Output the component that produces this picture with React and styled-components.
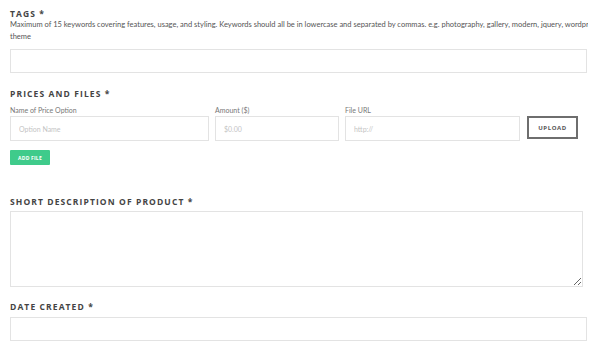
import React from "react";
import styled, { createGlobalStyle } from "styled-components";

const GlobalStyle = createGlobalStyle`
  html, body {
    margin: 0;
    padding: 0;
    background: #fff;
    overflow: hidden;
  }
  body {
    font-family: Lato, "Open Sans", sans-serif;
  }
`;

const Page = styled.div`
  width: 578px;
  padding: 8px 0 0 10px;
  display: flex;
  flex-direction: column;
  overflow: hidden;
`;

const Section = styled.div`
  display: flex;
  flex-direction: column;
  margin-top: ${(p) => p.top || 0}px;
`;

const Heading = styled.h3`
  margin: 0;
  font-family: "Open Sans", sans-serif;
  font-weight: 700;
  font-size: 8.5px;
  line-height: 11px;
  letter-spacing: 1.1px;
  color: #444;
  text-transform: uppercase;
`;

const Help = styled.p`
  margin: 0;
  width: 600px;
  font-size: 7.5px;
  line-height: 12px;
  color: #555;
`;

const Input = styled.input`
  box-sizing: border-box;
  display: block;
  width: ${(p) => p.w || "100%"};
  height: ${(p) => p.h || 24}px;
  margin-top: ${(p) => p.top || 0}px;
  border: 1px solid #e3e3e3;
  border-radius: 0;
  padding: 0 8px;
  font-family: Lato, sans-serif;
  font-size: 7px;
  color: #555;
  background: #fff;
  outline: none;
  &::placeholder {
    color: #c4c4c4;
  }
`;

const TextArea = styled.textarea`
  box-sizing: border-box;
  display: block;
  width: 573px;
  height: 76px;
  margin-top: 4px;
  border: 1px solid #e3e3e3;
  border-radius: 0;
  resize: both;
  outline: none;
  font-family: Lato, sans-serif;
`;

const PriceRow = styled.div`
  display: flex;
  align-items: flex-start;
  gap: 6px;
  margin-top: 5px;
`;

const Field = styled.div`
  display: flex;
  flex-direction: column;
  width: ${(p) => p.w}px;
`;

const Label = styled.label`
  font-size: 7px;
  line-height: 12px;
  color: #777;
`;

const UploadButton = styled.button`
  box-sizing: border-box;
  width: 51px;
  height: 23px;
  margin-top: 12px;
  margin-left: 1px;
  background: #fff;
  border: 2px solid #6e6e6e;
  border-radius: 0;
  font-family: "Open Sans", sans-serif;
  font-weight: 700;
  font-size: 6px;
  letter-spacing: 0.6px;
  color: #555;
  padding: 0;
`;

const AddButton = styled.button`
  align-self: flex-start;
  box-sizing: border-box;
  width: 40px;
  height: 15px;
  margin-top: 9px;
  padding: 0;
  border: none;
  border-radius: 1px;
  background: #3fcb8b;
  color: #fff;
  font-family: "Open Sans", sans-serif;
  font-weight: 700;
  font-size: 5px;
  letter-spacing: 0.2px;
`;

export default function App() {
  return (
    <>
      <GlobalStyle />
      <Page>
        <Section>
          <Heading>Tags *</Heading>
          <Help>
            Maximum of 15 keywords covering features, usage, and styling.
            Keywords should all be in lowercase and separated by commas. e.g.
            photography, gallery, modern, jquery, wordpress theme
          </Help>
          <Input top={6} w="577px" />
        </Section>

        <Section top={15}>
          <Heading>Prices and Files *</Heading>
          <PriceRow>
            <Field w={199}>
              <Label>Name of Price Option</Label>
              <Input h={25} placeholder="Option Name" />
            </Field>
            <Field w={124}>
              <Label>Amount ($)</Label>
              <Input h={25} placeholder="$0.00" />
            </Field>
            <Field w={175}>
              <Label>File URL</Label>
              <Input h={25} placeholder="http://" />
            </Field>
            <UploadButton>UPLOAD</UploadButton>
          </PriceRow>
          <AddButton>ADD FILE</AddButton>
        </Section>

        <Section top={31}>
          <Heading>Short Description of Product *</Heading>
          <TextArea />
        </Section>

        <Section top={14}>
          <Heading>Date Created *</Heading>
          <Input top={5} w="577px" />
        </Section>
      </Page>
    </>
  );
}
